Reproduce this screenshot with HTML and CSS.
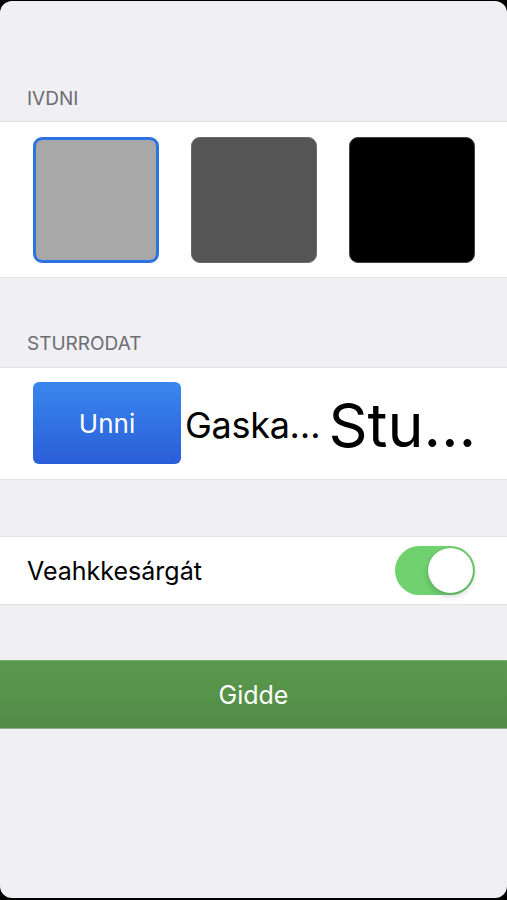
FILE: index.html
```html
<!DOCTYPE html>
<html>
<head>
<meta charset="utf-8">
<link rel="stylesheet" href="styles.css">
</head>
<body>
<div class="panel">
  <div class="label label-first">IVDNI</div>
  <div class="section swatches">
    <div class="swatch swatch-light selected"></div>
    <div class="swatch swatch-mid"></div>
    <div class="swatch swatch-dark"></div>
  </div>
  <div class="label label-second">STURRODAT</div>
  <div class="section sizes">
    <div class="size-btn">Unni</div>
    <div class="size-medium">Gaska…</div>
    <div class="size-large">Stu…</div>
  </div>
  <div class="section toggle-row">
    <span class="toggle-label">Veahkkesárgát</span>
    <div class="switch"><div class="knob"></div></div>
  </div>
  <div class="go-btn">Gidde</div>
</div>
</body>
</html>
```
FILE: styles.css
```css
html, body {
  margin: 0;
  padding: 0;
  background: #000;
  height: 900px;
  overflow: hidden;
}
body {
  padding-top: 1px;
  box-sizing: border-box;
  font-family: Inter, "Liberation Sans", sans-serif;
}
.panel {
  background: #efeff4;
  height: 897px;
  border-radius: 12px;
  overflow: hidden;
  display: flex;
  flex-direction: column;
}
.label {
  color: #6d6d72;
  font-size: 19px;
  padding-left: 27px;
  height: 24px;
  line-height: 24px;
}
.label-first {
  margin-top: 86px;
  margin-bottom: 10px;
}
.label-second {
  margin-top: 54px;
  margin-bottom: 11px;
}
.section {
  background: #fff;
  border-top: 1px solid #e2e2e6;
  border-bottom: 1px solid #e2e2e6;
}
.swatches {
  height: 157px;
  display: flex;
  align-items: center;
  gap: 32px;
  padding-left: 33px;
  box-sizing: border-box;
}
.swatch {
  width: 126px;
  height: 126px;
  border-radius: 9px;
  box-sizing: border-box;
}
.swatch-light { background: #a8a8a8; }
.swatch-mid { background: #555555; border: 1px solid #6a6a6a; }
.swatch-dark { background: #000; border: 1px solid #444; }
.selected { border: 3px solid #2f72e4; }
.sizes {
  height: 113px;
  box-sizing: border-box;
  display: flex;
  align-items: center;
  padding-left: 33px;
}
.size-btn {
  width: 148px;
  height: 82px;
  border-radius: 6px;
  background: linear-gradient(#3987ee, #2a5ed8);
  color: #fff;
  font-size: 26px;
  display: flex;
  align-items: center;
  justify-content: center;
  margin-bottom: 1px;
}
.size-medium {
  font-size: 36px;
  color: #000;
  margin-left: 4px;
  margin-top: 2px;
  letter-spacing: -0.3px;
}
.size-large {
  font-size: 61px;
  color: #000;
  margin-left: 8px;
  margin-top: 2px;
}
.toggle-row {
  margin-top: 56px;
  height: 69px;
  box-sizing: border-box;
  display: flex;
  align-items: center;
  justify-content: space-between;
  padding: 0 32px 0 27px;
}
.toggle-label {
  font-size: 25px;
  color: #000;
}
.switch {
  width: 80px;
  height: 49px;
  border-radius: 25px;
  background: #6fd26f;
  position: relative;
}
.knob {
  position: absolute;
  right: 2px;
  top: 2px;
  width: 45px;
  height: 45px;
  border-radius: 50%;
  background: #fff;
  box-shadow: 0 3px 6px rgba(0,0,0,0.2), 0 0 1px rgba(0,0,0,0.2);
}
.go-btn {
  margin-top: 55px;
  height: 69px;
  background: linear-gradient(#5a9a4d, #528a46);
  border-top: 1px solid #7aac70;
  border-bottom: 1px solid #8aae84;
  box-sizing: border-box;
  color: #fff;
  font-size: 25px;
  display: flex;
  align-items: center;
  justify-content: center;
}
```
